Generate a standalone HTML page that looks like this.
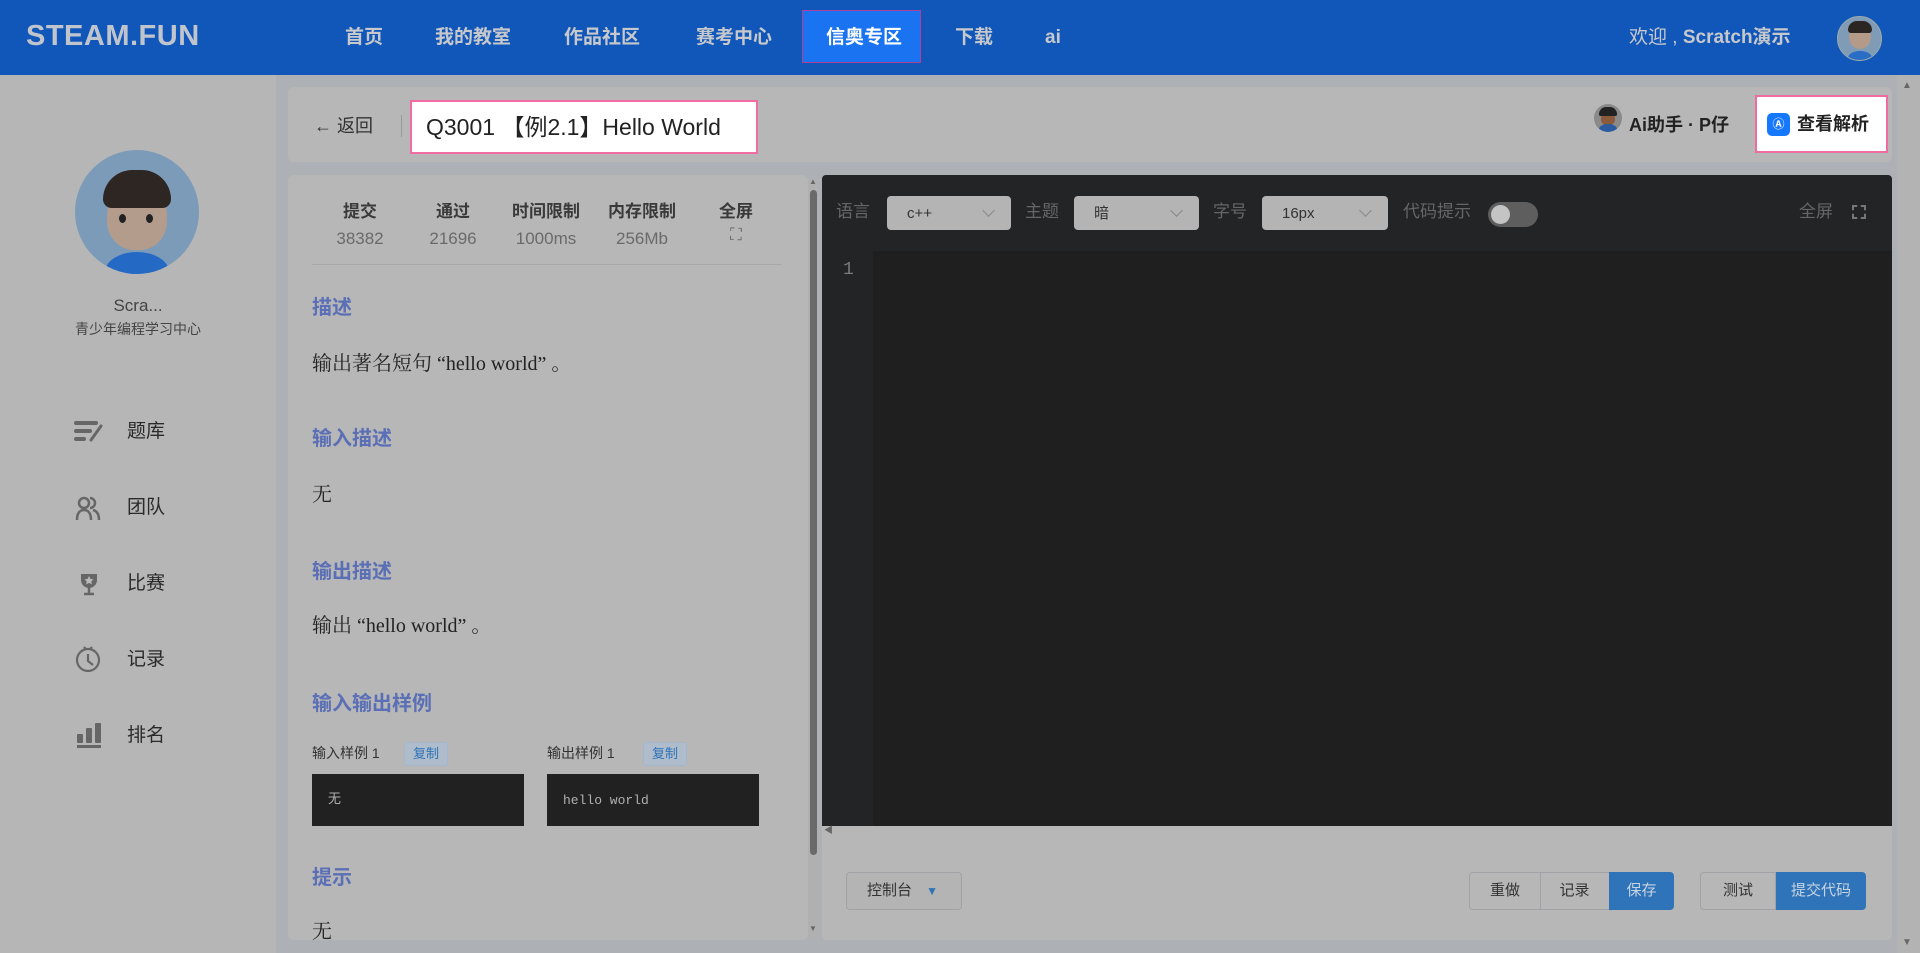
<!DOCTYPE html>
<html><head><meta charset="utf-8"><style>
*{box-sizing:border-box;margin:0;padding:0}
body{width:1920px;height:953px;overflow:hidden;background:#adb0b4;font-family:"Liberation Sans","Noto Sans CJK SC",sans-serif;position:relative;color:#222;line-height:1.1}
.a{position:absolute}
.hdr{left:0;top:0;width:1920px;height:75px;background:#1157b9}
.nav{top:28px;font-size:19px;font-weight:bold;color:#c6c8cc}
.side{left:0;top:75px;width:276px;height:878px;background:#b6b6b6}
.panel{background:#b7b7b7;border-radius:6px}
.mi{font-size:19px;color:#2a2a2a}
.stl{font-size:17px;font-weight:bold;color:#3a3a3a;text-align:center;width:100px}
.stv{font-size:17px;color:#6a6a6a;text-align:center;width:100px}
.h{font-size:20px;font-weight:bold;color:#5a6fb5}
.t{font-family:"Liberation Serif","Noto Serif CJK SC",serif;font-size:20px;color:#222}
.sel{background:#b4b4b4;border-radius:4px;height:34px;font-size:15px;color:#333;padding:10px 20px}
.sel:after{content:"";position:absolute;right:18px;top:10px;width:8px;height:8px;border-right:1px solid #888;border-bottom:1px solid #888;transform:rotate(45deg)}
.lbl{font-size:17px;color:#666;top:203px}
.btn{top:872px;height:38px;font-size:15px;color:#333;border:1px solid #a2a2a6;text-align:center;line-height:36px}
.cp{font-size:13px;color:#2f73b8;background:#aebccb;border:1px solid #a3b6cb;border-radius:3px;width:44px;height:24px;text-align:center;line-height:22px}
</style></head><body>
<div class="a hdr"></div>
<div class="a" style="left:26px;top:21px;font-size:29px;font-weight:bold;color:#c0c4cc;letter-spacing:0.5px">STEAM.FUN</div>
<div class="a nav" style="left:345px">首页</div>
<div class="a nav" style="left:435px">我的教室</div>
<div class="a nav" style="left:564px">作品社区</div>
<div class="a nav" style="left:696px">赛考中心</div>
<div class="a" style="left:802px;top:10px;width:119px;height:53px;background:#1a73f0;border:1px solid #b0409a"></div>
<div class="a nav" style="left:826px;color:#fff">信奥专区</div>
<div class="a nav" style="left:955px">下载</div>
<div class="a nav" style="left:1045px">ai</div>
<div class="a" style="left:1629px;top:28px;font-size:19px;color:#c6c8cc">欢迎 , <b>Scratch演示</b></div>
<div class="a" style="left:1837px;top:16px;width:45px;height:45px;border-radius:50%;background:#7f9bb6;overflow:hidden;border:1px solid #9aa"><div class="a" style="left:11px;top:8px;width:22px;height:24px;border-radius:50%;background:#b49a88"></div><div class="a" style="left:10px;top:4px;width:24px;height:12px;border-radius:12px 12px 4px 4px;background:#2c2622"></div><div class="a" style="left:10px;top:34px;width:24px;height:14px;border-radius:50%;background:#2a6dc4"></div></div>

<div class="a side"></div>
<div class="a" style="left:75px;top:150px;width:124px;height:124px;border-radius:50%;background:#7b9bb9;overflow:hidden">
<div class="a" style="left:32px;top:36px;width:60px;height:64px;border-radius:45%;background:#b49c8c"></div>
<div class="a" style="left:28px;top:20px;width:68px;height:38px;border-radius:34px 34px 10px 10px;background:#2d2622"></div>
<div class="a" style="left:44px;top:64px;width:7px;height:9px;border-radius:50%;background:#222"></div>
<div class="a" style="left:71px;top:64px;width:7px;height:9px;border-radius:50%;background:#222"></div>
<div class="a" style="left:30px;top:102px;width:64px;height:40px;border-radius:50%;background:#2469c4"></div></div>
<div class="a" style="left:0;top:297px;width:276px;text-align:center;font-size:17px;color:#444">Scra...</div>
<div class="a" style="left:0;top:322px;width:276px;text-align:center;font-size:14px;color:#444">青少年编程学习中心</div>
<svg class="a" style="left:74px;top:420px" width="30" height="24" viewBox="0 0 30 24"><g stroke="#666" stroke-width="4" stroke-linecap="round"><path d="M2 3h20M2 11h14M2 19h8"/><path d="M27 6l-10 14" stroke-width="3"/></g></svg>
<svg class="a" style="left:75px;top:495px" width="26" height="26" viewBox="0 0 26 26" fill="none" stroke="#666" stroke-width="2.5"><circle cx="9" cy="8" r="5"/><path d="M2 25c0-7 3-10 7-10s7 3 7 10"/><path d="M15 3a5 5 0 0 1 0 10M18 15c4 1 6 4 6 10"/></svg>
<svg class="a" style="left:78px;top:572px" width="22" height="24" viewBox="0 0 22 24"><path d="M3 2h16v6a8 8 0 0 1-16 0z" fill="#666"/><path d="M11 15v6M6 22h10" stroke="#666" stroke-width="2.5"/><path d="M11 4l1.5 3 3 .4-2.2 2 .6 3-2.9-1.5-2.9 1.5.6-3-2.2-2 3-.4z" fill="#bbb"/></svg>
<svg class="a" style="left:75px;top:645px" width="26" height="28" viewBox="0 0 26 28" fill="none" stroke="#666" stroke-width="2.2"><circle cx="13" cy="15" r="11"/><path d="M13 9v7l5 4M9 2l2 2M17 2l-2 2"/></svg>
<svg class="a" style="left:76px;top:722px" width="26" height="26" viewBox="0 0 26 26" fill="#666"><rect x="1" y="12" width="6" height="9" rx="1"/><rect x="10" y="6" width="6" height="15" rx="1"/><rect x="19" y="1" width="6" height="20" rx="1"/><rect x="1" y="23" width="24" height="3"/></svg>
<div class="a mi" style="left:127px;top:422px">题库</div>
<div class="a mi" style="left:127px;top:498px">团队</div>
<div class="a mi" style="left:127px;top:574px">比赛</div>
<div class="a mi" style="left:127px;top:650px">记录</div>
<div class="a mi" style="left:127px;top:726px">排名</div>

<div class="a panel" style="left:288px;top:87px;width:1604px;height:75px"></div>
<div class="a" style="left:314px;top:117px;font-size:18px;color:#333">← 返回</div>
<div class="a" style="left:401px;top:115px;width:1px;height:22px;background:#999"></div>
<div class="a" style="left:410px;top:100px;width:348px;height:54px;background:#fff;border:2px solid #f06ca0;font-size:23px;color:#222;padding:13px 14px;white-space:nowrap">Q3001 【例2.1】Hello World</div>
<div class="a" style="left:1594px;top:104px;width:28px;height:28px;border-radius:50%;background:#8a8a8a;overflow:hidden"><div class="a" style="left:7px;top:8px;width:14px;height:14px;border-radius:50%;background:#8a5a3a"></div><div class="a" style="left:5px;top:3px;width:18px;height:9px;border-radius:8px 8px 2px 2px;background:#222"></div><div class="a" style="left:5px;top:20px;width:18px;height:10px;border-radius:50%;background:#2a5aa0"></div></div>
<div class="a" style="left:1629px;top:116px;font-size:18px;font-weight:bold;color:#222">Ai助手 · P仔</div>
<div class="a" style="left:1755px;top:95px;width:133px;height:58px;background:#fff;border:2px solid #f06ca0"></div>
<div class="a" style="left:1767px;top:113px;width:23px;height:23px;border-radius:5px;background:#1677ff;color:#fff;font-size:12px;font-weight:bold;text-align:center;line-height:23px">Ⓐ</div>
<div class="a" style="left:1797px;top:115px;font-size:18px;font-weight:bold;color:#222">查看解析</div>

<div class="a panel" style="left:288px;top:175px;width:520px;height:765px"></div>
<div class="a" style="left:809px;top:178px;width:9px;height:760px;background:#b0b0b0"></div>
<div class="a" style="left:810px;top:190px;width:7px;height:665px;background:#6a6a6a;border-radius:4px"></div>
<div class="a" style="left:809px;top:178px;font-size:8px;color:#666">▲</div>
<div class="a" style="left:809px;top:925px;font-size:8px;color:#666">▼</div>
<div class="a stl" style="left:310px;top:203px">提交</div><div class="a stv" style="left:310px;top:230px">38382</div>
<div class="a stl" style="left:403px;top:203px">通过</div><div class="a stv" style="left:403px;top:230px">21696</div>
<div class="a stl" style="left:496px;top:203px">时间限制</div><div class="a stv" style="left:496px;top:230px">1000ms</div>
<div class="a stl" style="left:592px;top:203px">内存限制</div><div class="a stv" style="left:592px;top:230px">256Mb</div>
<div class="a stl" style="left:686px;top:203px">全屏</div><div class="a stv" style="left:686px;top:226px">⛶</div>
<div class="a" style="left:312px;top:264px;width:470px;height:1px;background:#a8a8a8"></div>
<div class="a h" style="left:312px;top:297px">描述</div>
<div class="a t" style="left:312px;top:353px">输出著名短句 “hello world” 。</div>
<div class="a h" style="left:312px;top:428px">输入描述</div>
<div class="a t" style="left:312px;top:484px">无</div>
<div class="a h" style="left:312px;top:561px">输出描述</div>
<div class="a t" style="left:312px;top:615px">输出 “hello world” 。</div>
<div class="a h" style="left:312px;top:693px">输入输出样例</div>
<div class="a" style="left:312px;top:746px;font-size:14px;color:#333">输入样例 1</div>
<div class="a cp" style="left:404px;top:742px">复制</div>
<div class="a" style="left:547px;top:746px;font-size:14px;color:#333">输出样例 1</div>
<div class="a cp" style="left:643px;top:742px">复制</div>
<div class="a" style="left:312px;top:774px;width:212px;height:52px;background:#212121;color:#b0b0b0;font-family:'Liberation Mono',monospace;font-size:13px;padding:19px 16px">无</div>
<div class="a" style="left:547px;top:774px;width:212px;height:52px;background:#212121;color:#b0b0b0;font-family:'Liberation Mono',monospace;font-size:13px;padding:20px 16px">hello world</div>
<div class="a h" style="left:312px;top:867px">提示</div>
<div class="a t" style="left:312px;top:921px">无</div>

<div class="a" style="left:822px;top:175px;width:1070px;height:765px;background:#b7b7b7;border-radius:4px"></div>
<div class="a" style="left:822px;top:175px;width:1070px;height:651px;background:#232426;border-radius:4px 4px 0 0"></div>
<div class="a" style="left:822px;top:251px;width:51px;height:575px;background:#232426"></div>
<div class="a" style="left:873px;top:251px;width:1019px;height:575px;background:#1f1f1f"></div>
<div class="a" style="left:843px;top:261px;font-size:18px;color:#7a7a7a;font-family:'Liberation Mono',monospace">1</div>
<div class="a lbl" style="left:836px">语言</div>
<div class="a sel" style="left:887px;top:196px;width:124px">c++</div>
<div class="a lbl" style="left:1025px">主题</div>
<div class="a sel" style="left:1074px;top:196px;width:125px">暗</div>
<div class="a lbl" style="left:1213px">字号</div>
<div class="a sel" style="left:1262px;top:196px;width:126px">16px</div>
<div class="a lbl" style="left:1403px">代码提示</div>
<div class="a" style="left:1488px;top:202px;width:50px;height:25px;border-radius:13px;background:#5e5e5e"></div>
<div class="a" style="left:1491px;top:205px;width:19px;height:19px;border-radius:50%;background:#c4c4c4"></div>
<div class="a lbl" style="left:1799px">全屏</div>
<div class="a" style="left:1852px;top:205px;width:14px;height:14px;border:2px dashed #777"></div>
<div class="a" style="left:824px;top:826px;font-size:9px;color:#666">◀</div>
<div class="a btn" style="left:846px;width:116px;border-radius:4px;background:#b4b4b4;text-align:left;padding-left:20px">控制台 <span style="color:#2f73b8;font-size:12px;margin-left:10px">▼</span></div>
<div class="a btn" style="left:1469px;width:72px;border-radius:4px 0 0 4px">重做</div>
<div class="a btn" style="left:1540px;width:70px;border-left:none">记录</div>
<div class="a btn" style="left:1609px;width:65px;background:#2f73b8;border-color:#2f73b8;color:#c8d4e2;border-radius:0 4px 4px 0">保存</div>
<div class="a btn" style="left:1700px;width:76px;border-radius:4px 0 0 4px">测试</div>
<div class="a btn" style="left:1776px;width:90px;background:#2f73b8;border-color:#2f73b8;color:#c8d4e2;border-radius:0 4px 4px 0">提交代码</div>
<div class="a" style="left:1897px;top:75px;width:23px;height:878px;background:#b3b3b3"></div>
<div class="a" style="left:1902px;top:80px;font-size:10px;color:#666">▲</div>
<div class="a" style="left:1902px;top:937px;font-size:10px;color:#666">▼</div>
</body></html>
